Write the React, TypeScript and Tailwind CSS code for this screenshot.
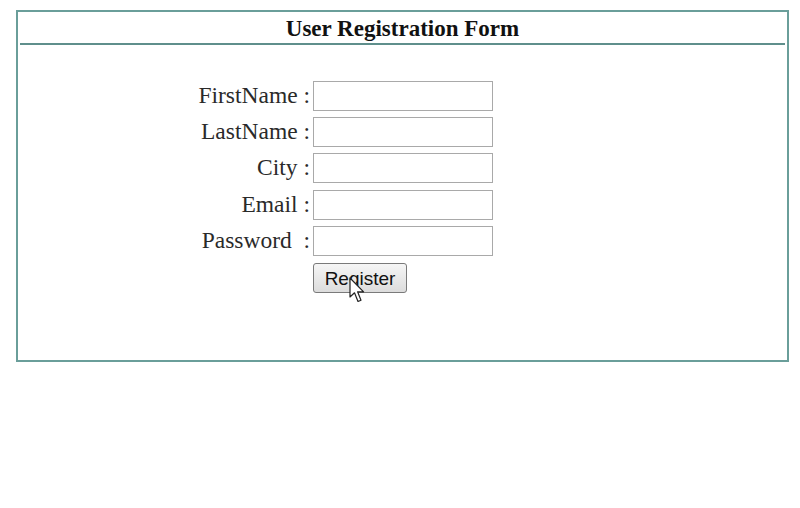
const fields = [
  { label: 'FirstName :', type: 'text' },
  { label: 'LastName :', type: 'text' },
  { label: 'City :', type: 'text' },
  { label: 'Email :', type: 'text' },
  { label: 'Password\u00a0 :', type: 'password' },
];

const Cursor = () => (
  <svg
    width="18"
    height="27"
    viewBox="0 0 18 27"
    className="absolute left-[36px] top-[14px] pointer-events-none"
  >
    <path
      d="M1 1 L1 20 L5.5 15.8 L9 24.5 L12 23.2 L8.6 14.8 L14.6 14.8 Z"
      fill="#ffffff"
      stroke="#222222"
      strokeWidth="1.2"
      strokeLinejoin="round"
    />
  </svg>
);

export default function App() {
  return (
    <div className="w-[800px] h-[508px] bg-white pt-[10px] pl-[16px]">
      <div className="w-[773px] h-[352px] border-2 border-[#6a9e9a]">
        <div className="mx-[2px] h-[33px] border-b-2 border-[#5f8f8c] flex items-center justify-center">
          <h1 className="text-[23px] font-bold text-[#111] font-['Liberation_Serif',serif] leading-none mt-[1px]">
            User Registration Form
          </h1>
        </div>

        <div className="pl-[152px] pt-[36px] flex flex-col gap-[6px]">
          {fields.map((f, i) => (
            <div key={f.label} className={`flex items-center gap-[3px] ${i >= 3 ? 'translate-y-[1px]' : ''}`}>
              <label className="w-[140px] text-right text-[23.5px] text-[#2a2a2a] font-['Liberation_Serif',serif] leading-none whitespace-pre">
                {f.label}
              </label>
              <input
                type={f.type}
                className="w-[180px] h-[30px] border border-[#a9a9a9] bg-white outline-none"
              />
            </div>
          ))}
          <div className="flex mt-[2px]">
            <div className="w-[143px]" />
            <div className="relative">
              <button className="w-[94px] h-[30px] border border-[#7a7a7a] rounded-[3px] bg-gradient-to-b from-[#f6f6f6] to-[#dcdcdc] text-[19px] text-[#111] font-['Liberation_Sans',sans-serif] leading-none">
                Register
              </button>
              <Cursor />
            </div>
          </div>
        </div>
      </div>
    </div>
  );
}
